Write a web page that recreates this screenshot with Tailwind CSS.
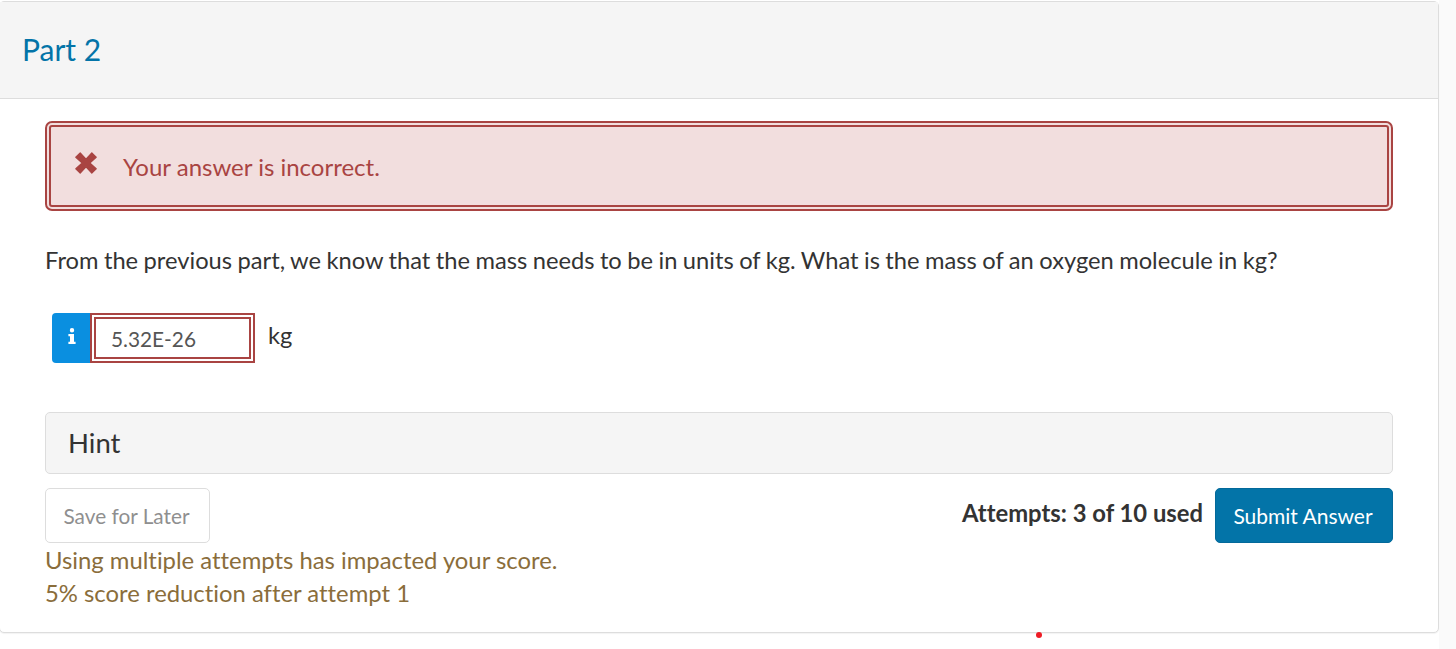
<!DOCTYPE html>
<html><head><meta charset="utf-8"><script src="https://cdn.jsdelivr.net/npm/@tailwindcss/browser@4"></script></head>
<body class="bg-white font-['Lato',sans-serif] text-[#333] overflow-hidden [font-variant-ligatures:none]">
<div class="flex h-[649px] w-[1456px] overflow-hidden">
  <main class="relative w-[1439px] shrink-0 pt-px">
    <section class="-ml-px h-[632px] w-[1440px] rounded-[5px] border border-[#ddd] bg-white shadow-[0_1px_1px_rgba(0,0,0,0.05)]">
      <header class="flex h-[97px] items-center border-b border-[#ddd] bg-[#f5f5f5] pb-[2px] pl-[22px]">
        <h2 class="text-[30px] leading-none text-[#0374a8]">Part 2</h2>
      </header>
      <div class="px-[45px] pt-[22px]">
        <div class="flex h-[90px] w-[1348px] items-center rounded-[7px] border-[6px] border-double border-[#a94442] bg-[#f2dede] pl-[24px] text-[#a94442]">
          <svg class="mb-[6px] h-[22px] w-[22px] shrink-0" viewBox="0 0 22 22" aria-hidden="true"><path fill="#a94442" stroke="#a94442" stroke-width="1.200" stroke-linejoin="round" d="M.800 5.200 5.200.800 11 7.200 16.800.800 21.200 5.200 14.800 11 21.200 16.800 16.800 21.200 11 14.800 5.200 21.200.800 16.800 7.200 11Z"/></svg>
          <span class="ml-[26px] pt-[2px] text-[24px] leading-none">Your answer is incorrect.</span>
        </div>
        <p class="mt-[34px] text-[23.700px] leading-[30px] [word-spacing:-0.6px]">From the previous part, we know that the mass needs to be in units of kg. What is the mass of an oxygen molecule in kg?</p>
        <div class="mt-[38px] flex h-[50px] items-start pl-[7px]">
          <div class="flex h-[50px] w-[38px] items-center justify-center rounded-l-[4px] bg-[#0a8fe0]">
            <svg class="mb-[4px] ml-[1px] h-[16px] w-[8px]" viewBox="0 0 8 16" aria-hidden="true"><path fill="#fff" d="M1.800 2.200a2.200 2.200 0 1 1 4.400 0 2.200 2.200 0 0 1-4.400 0ZM.400 6h5.600v7.800h1.600V16H.400v-2.200H2V8.200H.400Z"/></svg>
          </div>
          <div class="flex h-[50px] w-[165px] items-center border-[6px] border-double border-[#a94442] bg-white pl-[15px] pt-[3px] text-[20.800px] leading-none text-[#555]">5.32E-26</div>
          <span class="ml-[13px] mt-[7px] text-[23.700px] leading-[30px]">kg</span>
        </div>
        <div class="mt-[49px] flex h-[62px] w-[1348px] items-center rounded-[5px] border border-[#ddd] bg-[#f5f5f5] pl-[22px] text-[27.500px] leading-none">Hint</div>
        <div class="mt-[14px] flex h-[55px] w-[1348px] items-start justify-between">
          <button class="h-[55px] w-[165px] rounded-[5px] border border-[#ddd] bg-white pr-[2px] text-[20.800px] text-[#8f8f8f]">Save for Later</button>
          <div class="flex items-start">
            <span class="mr-[12px] mt-[10px] text-[23.800px] font-bold leading-[30px]">Attempts: 3 of 10 used</span>
            <button class="h-[55px] w-[178px] rounded-[5px] border border-[#03699a] bg-[#0374a8] pr-[2px] text-[21px] text-white">Submit Answer</button>
          </div>
        </div>
        <p class="text-[23.850px] leading-[33px] text-[#8a6d3b]">Using multiple attempts has impacted your score.<br>5% score reduction after attempt 1</p>
      </div>
    </section>
    <span class="absolute left-[1035.500px] top-[632px] h-[6px] w-[6px] rounded-full bg-[#ee1c25]"></span>
  </main>
  <aside class="flex-1 bg-[#fafafa]"></aside>
</div>
</body></html>
